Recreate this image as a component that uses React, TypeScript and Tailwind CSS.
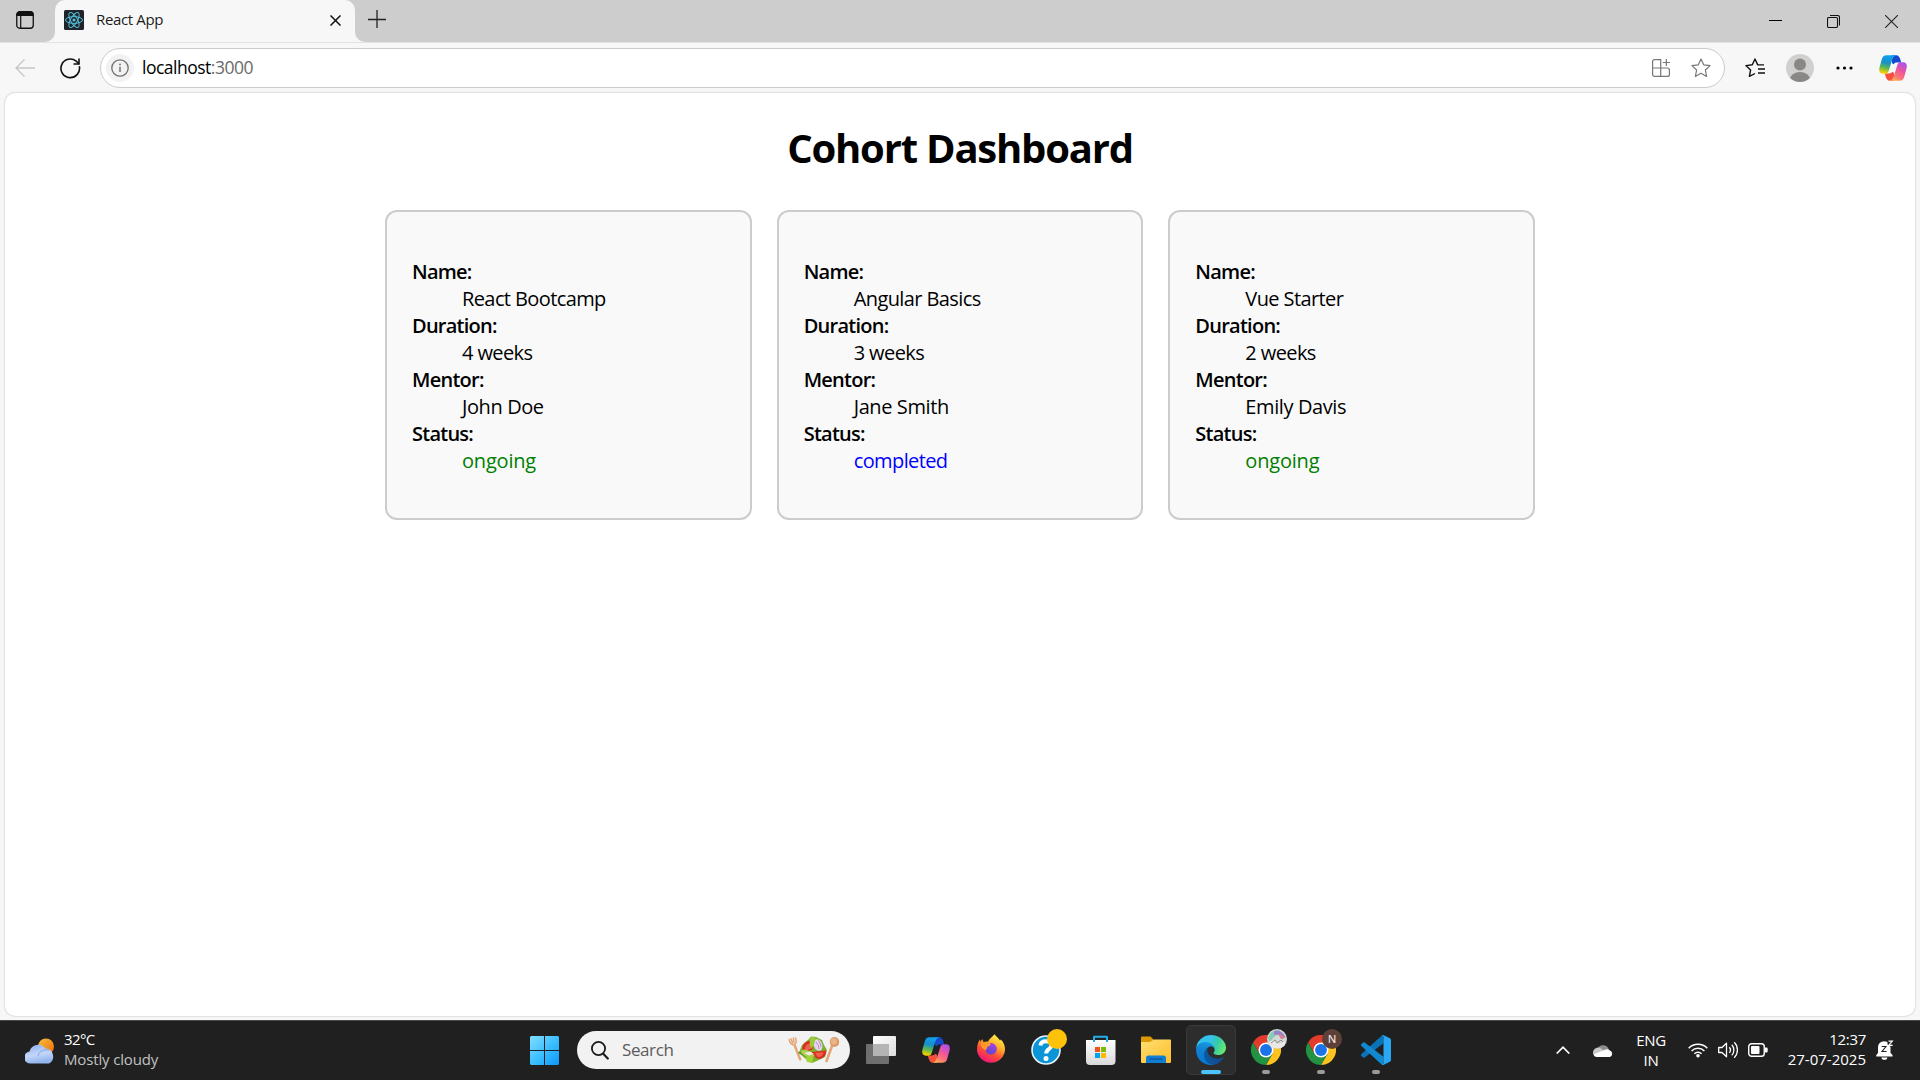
import React from "react";

type Cohort = { name: string; duration: string; mentor: string; status: "ongoing" | "completed" };

const cohorts: Cohort[] = [
  { name: "React Bootcamp", duration: "4 weeks", mentor: "John Doe", status: "ongoing" },
  { name: "Angular Basics", duration: "3 weeks", mentor: "Jane Smith", status: "completed" },
  { name: "Vue Starter", duration: "2 weeks", mentor: "Emily Davis", status: "ongoing" },
];

/* ---------- logos ---------- */

function CopilotLogo({ id }: { id: string }) {
  return (
    <svg width="28" height="26" viewBox="0 0 28 26">
      <defs>
        <linearGradient id={id + "a"} x1="0.5" y1="0" x2="0.3" y2="1">
          <stop offset="0" stopColor="#12a0f0" />
          <stop offset="0.4" stopColor="#1790c8" />
          <stop offset="0.68" stopColor="#5db94e" />
          <stop offset="0.95" stopColor="#f5d000" />
        </linearGradient>
        <linearGradient id={id + "b"} x1="0.8" y1="0" x2="0.3" y2="1">
          <stop offset="0" stopColor="#a94ff0" />
          <stop offset="0.45" stopColor="#f0559a" />
          <stop offset="0.8" stopColor="#fb7a72" />
          <stop offset="1" stopColor="#ffb152" />
        </linearGradient>
      </defs>
      <path d="M13 .3H17C19.600 .3 20.600 2 21.300 4.300L22.200 7.600H18.500C16.500 7.600 15.500 8 14.500 9.300L13 8Z" fill="#1749cf" />
      <path d="M15 25.700H11C8.400 25.700 7.400 24 6.700 21.700L5.800 18.400H9.500C11.500 18.400 12.500 18 13.500 16.700L15 18Z" fill="#f5503c" />
      <path d="M7.800 .3H17.300C14.800 1 13.800 3 12.800 6L9.900 15.200C9.200 17.700 8.300 18.700 6 18.700H4C.6 18.700-.4 16.200 .5 12.500L2.700 4.600C3.500 1.700 4.800 .3 7.800 .3Z" fill={`url(#${id}a)`} />
      <path d="M20.200 25.700H10.700C13.200 25 14.200 23 15.200 20L18.100 10.800C18.800 8.300 19.700 7.300 22 7.300H24C27.400 7.300 28.400 9.800 27.500 13.500L25.300 21.400C24.500 24.300 23.200 25.700 20.200 25.700Z" fill={`url(#${id}b)`} />
    </svg>
  );
}

function EdgeLogo() {
  return (
    <svg width="30" height="30" viewBox="0 0 256 256">
      <defs>
        <linearGradient id="edgeDark" x1="0" y1="0.5" x2="1" y2="0.5">
          <stop offset="0" stopColor="#0c59a4" />
          <stop offset="1" stopColor="#114a8b" />
        </linearGradient>
        <linearGradient id="edgeMid" x1="0.6" y1="0" x2="0.4" y2="1">
          <stop offset="0" stopColor="#1b9de2" />
          <stop offset="0.45" stopColor="#1080d0" />
          <stop offset="1" stopColor="#0678d4" />
        </linearGradient>
        <linearGradient id="edgeTop" x1="0" y1="0.3" x2="1" y2="0.6">
          <stop offset="0" stopColor="#35c1f1" />
          <stop offset="0.4" stopColor="#34c1ed" />
          <stop offset="0.68" stopColor="#36c9a6" />
          <stop offset="1" stopColor="#66eb6e" />
        </linearGradient>
      </defs>
      <path fill="url(#edgeDark)" d="M231 190.500a94 94 0 0 1-10.500 4.700 102 102 0 0 1-36 6.500c-47.300 0-88.500-32.500-88.500-74.300A31.500 31.500 0 0 1 112.500 100c-42.800 1.800-53.800 46.400-53.800 72.500 0 74 68 81.400 82.700 81.400 8 0 19.900-2.300 27-4.500l1.300-.5a128 128 0 0 0 66.600-52.800 4 4 0 0 0-5.300-5.600z" />
      <path fill="url(#edgeMid)" d="M105.700 241.400A79.200 79.200 0 0 1 83 220.100a80.700 80.700 0 0 1 29.500-120c3.100-1.500 8.500-4.100 15.600-4a32.400 32.400 0 0 1 25.700 13 31.900 31.900 0 0 1 6.300 18.700c0-.2 24.500-79.600-80-79.600C36.100 48.200 0 89.900 0 126.400a130 130 0 0 0 12.100 56 128 128 0 0 0 156.400 67.100 75.500 75.500 0 0 1-62.800-8z" />
      <path fill="url(#edgeTop)" d="M152.300 148.900c-.8 1-3.300 2.500-3.300 5.600 0 2.600 1.700 5.200 4.700 7.300 14.400 10 41.500 8.700 41.500 8.700a59.600 59.600 0 0 0 30.300-8.300A61.400 61.400 0 0 0 256 109.200c.2-22.400-8-37.300-11.400-43.900C223.500 23.900 177.700 0 128 0A128 128 0 0 0 0 126.200C.5 89.700 36.800 60.200 80 60.200c3.500 0 23.500.3 42 10.100 16.300 8.500 24.900 18.900 30.800 29.200 6.200 10.600 7.300 24.100 7.300 29.500s-2.700 13.300-7.800 19.900z" />
    </svg>
  );
}

function ChromeLogo() {
  return (
    <svg width="30" height="30" viewBox="0 0 48 48">
      <path d="M24 12H44.800A24 24 0 0 0 3.200 12L13.600 30Z" fill="#e33b2e" />
      <path d="M44.800 12H24L34.400 30 24 48A24 24 0 0 0 44.800 12Z" fill="#fcc31e" />
      <path d="M3.200 12 13.600 30 24 36 34.400 30 24 48A24 24 0 0 1 3.200 12Z" fill="#229342" />
      <circle cx="24" cy="24" r="12" fill="#fff" />
      <circle cx="24" cy="24" r="9.500" fill="#1a73e8" />
    </svg>
  );
}

function VsCodeLogo() {
  return (
    <svg width="30" height="30" viewBox="0 0 24 24">
      <path d="M.33 15.260 16.500.500A1.500 1.500 0 0 1 18 .150V6.550L2.930 18a1 1 0 0 1-1.280-.060L.330 16.740a1 1 0 0 1 0-1.480Z" fill="#0873b8" />
      <path d="M.330 8.740 16.500 23.500A1.500 1.500 0 0 0 18 23.850V17.450L2.930 6a1 1 0 0 0-1.280.060L.330 7.260a1 1 0 0 0 0 1.480Z" fill="#1189d0" />
      <path d="M23.150 2.590 18.210.210A1.490 1.490 0 0 0 16.600.450C17.300.200 18 .700 18 1.500V22.500C18 23.300 17.300 23.800 16.600 23.550A1.490 1.490 0 0 0 18.210 23.790L23.150 21.410A1.500 1.500 0 0 0 24 20.060V3.940A1.500 1.500 0 0 0 23.150 2.590Z" fill="#2aa7f2" />
    </svg>
  );
}

function FirefoxLogo() {
  return (
    <svg width="28" height="29" viewBox="0 0 28 29">
      <defs>
        <linearGradient id="ffBody" x1="0.8" y1="0.05" x2="0.3" y2="1">
          <stop offset="0" stopColor="#fff04a" />
          <stop offset="0.35" stopColor="#ffb02a" />
          <stop offset="0.65" stopColor="#ff4d36" />
          <stop offset="1" stopColor="#ee1080" />
        </linearGradient>
        <linearGradient id="ffCore" x1="0.7" y1="0" x2="0.3" y2="1">
          <stop offset="0" stopColor="#a541e8" />
          <stop offset="1" stopColor="#5a48c8" />
        </linearGradient>
      </defs>
      <path d="M17.500 .3C19 2.500 21.500 4 23 6.500L23.800 5.500C26.500 8 28 11.500 28 15A14 13.700 0 0 1 0 15C0 11.500 1 8 3 5.500L3.500 8C4 6.500 4.800 5.700 5.500 5.200L6.500 8.300C8 7.500 9.500 7.500 11 7.800 12 5 14.500 3.500 17.500 .3Z" fill="url(#ffBody)" />
      <circle cx="14" cy="14.800" r="5.800" fill="url(#ffCore)" />
      <path d="M4 9.500C6.500 7.500 9.500 8 11 9.200 12.500 9.300 13.500 9.600 14 10.200 13.500 11.800 10.500 12 10.200 13.200 9.900 14.500 9 15.500 8.500 16.200 5.500 15 4 12.500 4 9.500Z" fill="#ff9a28" />
    </svg>
  );
}

function StoreLogo() {
  return (
    <svg width="30" height="30" viewBox="0 0 30 30">
      <defs>
        <linearGradient id="bag" x1="0" y1="0" x2="0" y2="1">
          <stop offset="0" stopColor="#ffffff" />
          <stop offset="1" stopColor="#d9d9d9" />
        </linearGradient>
      </defs>
      <path d="M0 5h29.500v21a4 4 0 0 1-4 4h-21.500a4 4 0 0 1-4-4Z" fill="url(#bag)" />
      <path d="M8 7V2.200q0-.4.500-.4h12q.5 0 .5.400V7" fill="none" stroke="#22aee8" strokeWidth="2" />
      <rect x="9" y="12" width="5" height="5" fill="#f1511b" />
      <rect x="15" y="12" width="5" height="5" fill="#80bb02" />
      <rect x="9" y="18" width="5" height="5" fill="#02a3ee" />
      <rect x="15" y="18" width="5" height="5" fill="#fbb900" />
    </svg>
  );
}

function FolderLogo() {
  return (
    <svg width="30" height="28" viewBox="0 0 30 28">
      <defs>
        <linearGradient id="fold" x1="0" y1="0" x2="1" y2="1">
          <stop offset="0" stopColor="#ffdf73" />
          <stop offset="1" stopColor="#fdbd2a" />
        </linearGradient>
      </defs>
      <path d="M0 1.500Q0 .5 1 .5H9.500L13 4V8H0Z" fill="#dc9a05" />
      <path d="M0 6H9L13 3.500H29Q30 3.500 30 4.500V26Q30 27 29 27H1Q0 27 0 26Z" fill="url(#fold)" />
      <path d="M5 27V22Q5 19.500 7.500 19.500H22.500Q25 19.500 25 22V27Z" fill="#107ed2" />
      <path d="M8.500 23H21.500" stroke="#0a4f96" strokeWidth="1.200" />
    </svg>
  );
}

function ReactFavicon() {
  return (
    <svg width="20" height="20" viewBox="0 0 20 20">
      <rect width="20" height="20" rx="1.500" fill="#20232a" />
      <g fill="none" stroke="#53bfd8" strokeWidth="1">
        <ellipse cx="10" cy="10" rx="8.500" ry="3.400" />
        <ellipse cx="10" cy="10" rx="8.500" ry="3.400" transform="rotate(60 10 10)" />
        <ellipse cx="10" cy="10" rx="8.500" ry="3.400" transform="rotate(120 10 10)" />
      </g>
      <circle cx="10" cy="10" r="1.600" fill="#53bfd8" />
    </svg>
  );
}

function Salad() {
  return (
    <svg width="52" height="28" viewBox="0 0 52 28">
      <g stroke="#e3a777" strokeLinecap="round" fill="none">
        <path d="M6.500 9 12.200 23.500" strokeWidth="2.400" />
        <path d="M1.200 3.500C2 8 4.500 9.500 6 8.500 8 8 9 6 7.600 2M3.200 2.700 4.500 7M5.400 2 6 6.500" strokeWidth="1.500" />
        <path d="M44 10 38.500 25" strokeWidth="2.600" />
      </g>
      <ellipse cx="46.500" cy="6" rx="4.700" ry="5" fill="#dc9a6a" />
      <ellipse cx="46" cy="5.500" rx="3" ry="3.200" fill="#eab588" />
      <path d="M11 17 14 9 20 4 23 .5 28 1 34 4 36 9 39 14 37 21 31 24 24 27 19 24Z" fill="#7fb02c" />
      <path d="M14 13 10 17 20 22Z" fill="#5b9424" />
      <path d="M14.500 13A7.500 7.500 0 0 1 23 4.800L25 13 17 17Z" fill="#d92f22" />
      <path d="M17 13A5 5 0 0 1 22 7.500L23 12.500 18.500 15Z" fill="#f0604a" />
      <path d="M24 16 38 14.500A7 7 0 0 1 29 22.500L24 19Z" fill="#d92f22" />
      <path d="M27 17 35.500 16.300A5 5 0 0 1 29.500 20.800Z" fill="#f0604a" />
      <ellipse cx="30" cy="9" rx="4.200" ry="6" fill="#e6d4ea" transform="rotate(-20 30 9)" />
      <path d="M28 6Q31 9 31 13M30.500 4.500Q33 8 33 11" fill="none" stroke="#b48ac2" strokeWidth=".9" />
      <path d="M22 2Q25-.500 27.500 2 27 8 23 13 21 7 22 2Z" fill="#9ccc3e" />
      <path d="M12 15Q17 12 21 15T27 20L22 22Q16 21 12 15Z" fill="#a9cf55" />
      <path d="M16 17 22 15.500 26 18 21 19.500Z" fill="#f1ecdc" />
      <path d="M17.500 22Q23 18 25.500 22L24 27 19 26Z" fill="#a2d338" />
    </svg>
  );
}

/* ---------- browser chrome ---------- */

function TabStrip() {
  return (
    <div className="flex h-[42px] w-full">
      <div className="h-[42px] w-[55px] rounded-br-[10px] bg-[#cdcdcd] pl-4 pt-[11px]">
        <svg width="18" height="18" viewBox="0 0 18 18" fill="none">
          <rect x=".75" y=".75" width="16.500" height="16.500" rx="3" stroke="#111" strokeWidth="1.300" />
          <path d="M.5 5V3.500A3 3 0 0 1 3.500 .5h11a3 3 0 0 1 3 3V5Z" fill="#111" />
          <path d="M4.700 5v12" stroke="#111" strokeWidth="1.200" />
        </svg>
      </div>
      <div className="h-[42px] w-[300px] bg-[linear-gradient(#cdcdcd_50%,#f7f7f7_50%)]">
        <div className="flex h-[42px] items-start rounded-t-[10px] bg-[#f7f7f7] pl-[9px] pr-[14px] pt-[10px]">
          <ReactFavicon />
          <span className="-mt-px ml-[12px] flex-1 whitespace-nowrap text-[15px] leading-[20px] tracking-[-0.35px] text-[#1b1b1b]">React App</span>
          <svg width="11" height="11" viewBox="0 0 11 11" className="mt-[5px]">
            <path d="M.5 .5l10 10M10.500 .5l-10 10" stroke="#111" strokeWidth="1.500" />
          </svg>
        </div>
      </div>
      <div className="flex h-[42px] flex-1 justify-between rounded-bl-[10px] bg-[#cdcdcd] pl-[13px] pr-[22px]">
        <svg width="18" height="18" viewBox="0 0 18 18" className="mt-[10px]">
          <path d="M9 0v18M0 9.500h18" stroke="#222" strokeWidth="1.300" />
        </svg>
        <div className="flex items-start gap-[45px] pt-[15px]">
          <svg width="13" height="13" viewBox="0 0 13 13"><path d="M0 5.500h13" stroke="#000" /></svg>
          <svg width="13" height="13" viewBox="0 0 13 13" fill="none" stroke="#111" strokeWidth="1.100">
            <rect x=".5" y="2.500" width="10" height="10" rx="1.300" />
            <path d="M3 .5h7.500a2 2 0 0 1 2 2v8" />
          </svg>
          <svg width="13" height="13" viewBox="0 0 13 13"><path d="M0 0l13 13M13 0L0 13" stroke="#222" strokeWidth="1.100" /></svg>
        </div>
      </div>
    </div>
  );
}

function Toolbar() {
  return (
    <div className="flex h-[51px] w-full items-center border-t border-[#e3e3e3] pl-[15px] pr-[13px]">
      <svg width="20" height="18" viewBox="0 0 20 18" fill="none" stroke="#c6c6c6" strokeWidth="1.300">
        <path d="M20 9H1M9.500 .5 1 9l8.500 8.500" />
      </svg>
      <svg width="21" height="21" viewBox="0 0 21 21" fill="none" stroke="#111" strokeWidth="1.600" className="ml-[25px]">
        <path d="M19.300 8.200A9.300 9.300 0 1 1 16.200 3.200L19 5.800" />
        <path d="M19 .5V6H13.500" />
      </svg>
      <div className="ml-[19px] flex h-[40px] w-[1625px] items-center rounded-full border border-[#cbcbcb] bg-white pl-[5px] pr-[13px]">
        <div className="flex h-7 w-7 items-center justify-center rounded-full bg-[#f2f2f2]">
          <svg width="18" height="18" viewBox="0 0 18 18" fill="none" stroke="#707070" strokeWidth="1.300">
            <circle cx="9" cy="9" r="8.200" />
            <path d="M9 7.700V13" strokeWidth="1.500" />
            <circle cx="9" cy="5.400" r=".9" fill="#707070" stroke="none" />
          </svg>
        </div>
        <span className="mb-[2px] ml-[8px] flex-1 whitespace-nowrap text-[17.500px] tracking-[-0.5px] text-black">
          localhost<span className="text-[#6b6b6b]">:3000</span>
        </span>
        <svg width="18" height="18" viewBox="0 0 18 18" fill="none" stroke="#777" strokeWidth="1.200">
          <path d="M.6 2.600a2 2 0 0 1 2-2H8.700V17.400H2.600a2 2 0 0 1-2-2ZM.6 9H15.400a2 2 0 0 1 2 2v4.400a2 2 0 0 1-2 2H8.700M14.300 0v7M10.800 3.500H18" />
        </svg>
        <svg width="20" height="20" viewBox="0 0 20 20" fill="none" stroke="#777" strokeWidth="1.200" strokeLinejoin="round" className="ml-[21px]">
          <path d="M10 1l2.700 5.800 6.400.8-4.700 4.400 1.200 6.400L10 15.300 4.400 18.400 5.600 12 .9 7.600l6.400-.8Z" />
        </svg>
      </div>
      <svg width="20" height="20" viewBox="0 0 20 20" fill="none" stroke="#111" strokeWidth="1.400" strokeLinejoin="round" className="ml-[20px]">
        <path d="M19 6.900H12.700L10 1 7.300 6.800.9 7.600 5.600 12 4.400 18.400 10 15.500M13 11H20M13 15H20" />
      </svg>
      <svg width="28" height="28" viewBox="0 0 28 28" className="ml-[21px]">
        <defs><clipPath id="avatar"><circle cx="14" cy="14" r="14" /></clipPath></defs>
        <g clipPath="url(#avatar)">
          <rect width="28" height="28" fill="#d2d0ce" />
          <circle cx="14" cy="10.500" r="6" fill="#8a8886" />
          <ellipse cx="14" cy="25.500" rx="10" ry="7.500" fill="#8a8886" />
        </g>
      </svg>
      <svg width="17" height="4" viewBox="0 0 17 4" className="ml-[22px]">
        <circle cx="2" cy="2" r="1.600" /><circle cx="8.500" cy="2" r="1.600" /><circle cx="15" cy="2" r="1.600" />
      </svg>
      <div className="ml-auto"><CopilotLogo id="cpTop" /></div>
    </div>
  );
}

/* ---------- page ---------- */

function CohortCard({ cohort }: { cohort: Cohort }) {
  return (
    <div className="h-[310px] flex-1 rounded-[12px] border-2 border-[#ccc] bg-[#f9f9f9] px-[25px] pt-[46px]">
      <dl className="text-[20px] leading-[27px] tracking-[-0.6px] text-black [&_dd]:ml-[50px] [&_dt]:font-semibold [&_dt]:tracking-[-0.75px]">
        <dt>Name:</dt>
        <dd>{cohort.name}</dd>
        <dt>Duration:</dt>
        <dd>{cohort.duration}</dd>
        <dt>Mentor:</dt>
        <dd className="tracking-[-0.4px]">{cohort.mentor}</dd>
        <dt>Status:</dt>
        <dd className={cohort.status === "ongoing" ? "tracking-[-0.2px] text-[#008000]" : "text-[#0000ff]"}>{cohort.status}</dd>
      </dl>
    </div>
  );
}

/* ---------- taskbar ---------- */

function Tile({ children, active, running }: { children: React.ReactNode; active?: boolean; running?: boolean }) {
  return (
    <div className={active ? "relative flex h-[50px] w-[50px] items-center justify-center rounded-[5px] border border-[#3a3a3a] bg-[#2d2d2d]" : "relative flex h-[50px] w-[50px] items-center justify-center"}>
      {children}
      {active && <div className="absolute bottom-0 left-[14px] h-1 w-5 rounded-full bg-[#4cc2ff]" />}
      {running && <div className="absolute bottom-[1px] left-[21px] h-1 w-2 rounded-full bg-[#9a9a9a]" />}
    </div>
  );
}

function Taskbar() {
  return (
    <div className="flex h-[60px] w-full items-center border-t border-[#484848] bg-[#202020] pb-px text-[15px] text-white">
      <div className="flex w-[519px] items-center pl-[25px]">
        <svg width="30" height="26" viewBox="0 0 30 26" className="mt-[1px]">
          <defs>
            <linearGradient id="sun" x1="0" y1="0" x2="1" y2="1"><stop offset="0" stopColor="#f8c13a" /><stop offset="1" stopColor="#f06a10" /></linearGradient>
            <linearGradient id="cld" x1="0" y1="0" x2="0.3" y2="1"><stop offset="0" stopColor="#8fb0ee" /><stop offset="0.6" stopColor="#c3d6f8" /><stop offset="1" stopColor="#92b5ee" /></linearGradient>
          </defs>
          <circle cx="21" cy="8.500" r="8" fill="url(#sun)" />
          <path d="M6 25.500A6 6 0 0 1 4.500 13.500 9 9 0 0 1 20.500 10.500 8 8 0 0 1 24 25.500Z" fill="url(#cld)" />
          <path d="M13 18C14 13 20 10.500 24 12.500" stroke="#86a5e6" strokeWidth="1" fill="none" />
        </svg>
        <div className="mb-[3px] ml-[9px] whitespace-nowrap leading-[20px]">
          <div className="tracking-[-0.6px]">32°C</div>
          <div className="tracking-[-0.15px] text-[#c2c2c2]">Mostly cloudy</div>
        </div>
      </div>
      <Tile>
        <svg width="29" height="29" viewBox="0 0 29 29">
          <defs><linearGradient id="win" gradientUnits="userSpaceOnUse" x1="0" y1="0" x2="29" y2="29"><stop offset="0" stopColor="#82dfff" /><stop offset="0.55" stopColor="#38bdff" /><stop offset="1" stopColor="#0c95fb" /></linearGradient></defs>
          <path d="M1 0H14V14H0V1ZM15 0H28L29 1V14H15ZM0 15H14V29H1L0 28ZM15 15H29V28L28 29H15Z" fill="url(#win)" />
        </svg>
      </Tile>
      <div className="ml-[8px] mr-[6px] flex h-[38px] w-[273px] items-center rounded-full bg-[#f2f2f2] pl-[14px] pr-[10px]">
        <svg width="18" height="19" viewBox="0 0 18 19" fill="none" stroke="#1c1c1c" strokeLinecap="round">
          <circle cx="7.500" cy="7.500" r="6.600" strokeWidth="1.800" />
          <path d="M12.500 13l4.300 4.500" strokeWidth="2.200" />
        </svg>
        <span className="ml-[13px] flex-1 text-[17px] tracking-[-0.4px] text-[#5c5c5c]">Search</span>
        <Salad />
      </div>
      <div className="flex gap-[5px]">
        <Tile>
          <svg width="30" height="28" viewBox="0 0 30 28">
            <defs><linearGradient id="tv" x1="0" y1="0" x2="1" y2="1"><stop offset="0" stopColor="#fff" /><stop offset="1" stopColor="#dcdcdc" /></linearGradient></defs>
            <rect x="7" y="0" width="23" height="20" rx="1" fill="url(#tv)" />
            <rect x="0" y="8" width="23" height="20" rx="1" fill="#6f6f6f" />
            <rect x="7" y="8" width="16" height="12" fill="#b4b4b4" />
          </svg>
        </Tile>
        <Tile><CopilotLogo id="cpBar" /></Tile>
        <Tile><div className="mb-[3px]"><FirefoxLogo /></div></Tile>
        <Tile>
          <svg width="30" height="30" viewBox="0 0 30 30">
            <circle cx="15" cy="15" r="14" fill="#0a95d8" stroke="#e8f4fa" strokeWidth="1.600" />
            <path d="M9.500 10.500Q10 6.300 15 6.300 20.300 6.300 20.300 10.500C20.300 14.500 15.200 14 15.200 18.500" fill="none" stroke="#fff" strokeWidth="4" />
            <circle cx="15" cy="23.500" r="2.500" fill="#fff" />
          </svg>
          <div className="absolute left-[26px] top-[4px] h-5 w-5 rounded-full bg-[#ffc20a]" />
        </Tile>
        <Tile><StoreLogo /></Tile>
        <Tile><FolderLogo /></Tile>
        <Tile active><EdgeLogo /></Tile>
        <Tile running>
          <ChromeLogo />
          <svg width="20" height="20" viewBox="0 0 20 20" className="absolute left-[26px] top-[4px]">
            <defs><clipPath id="bdg"><circle cx="10" cy="10" r="10" /></clipPath></defs>
            <g clipPath="url(#bdg)">
              <rect width="20" height="20" fill="#d4d8d6" />
              <path d="M1 9Q3 1 12 1L19 9 14 8Q11 4 7 8L3 13Z" fill="#86cdb4" />
              <path d="M7 2Q14 0 18.500 8L15 9Q12 4 7 6Z" fill="#9a80cc" />
              <path d="M11 5Q16 5 17 10L14 10Z" fill="#de8088" />
              <path d="M2 13Q9 9 10 13T18 12V19H5Z" fill="#ecebe6" opacity=".85" />
              <path d="M4 14 8 11 10 14 14 11 16 13" stroke="#8c8c8c" fill="none" />
            </g>
          </svg>
        </Tile>
        <Tile running>
          <ChromeLogo />
          <div className="absolute left-[26px] top-[4px] flex h-5 w-5 items-center justify-center rounded-full bg-[#5d4037] text-[11px] font-semibold text-[#e4dcd9]">N</div>
        </Tile>
        <Tile running><VsCodeLogo /></Tile>
      </div>
      <div className="ml-auto flex items-center pr-[26px]">
        <svg width="14" height="8" viewBox="0 0 14 8" fill="none" stroke="#fff" strokeWidth="1.700"><path d="M.7 7.500 7 1.200l6.300 6.300" /></svg>
        <svg width="20" height="13" viewBox="0 0 20 13" className="ml-[23px]">
          <path d="M4.500 5A6 6 0 0 1 15.500 4.500L16 8H5Z" fill="#8c8c8c" />
          <path d="M4 12.500A4 4 0 0 1 .5 6.500 5 5 0 0 1 8 4.500L14 9Z" fill="#c9c9c9" />
          <path d="M3.500 13Q1 12.500 .5 10.500L11.500 6A5 5 0 0 1 17 6.500 3.500 3.500 0 0 1 17 13Z" fill="#fff" />
        </svg>
        <div className="mb-[1px] ml-[18px] w-[40px] text-center leading-[20px] tracking-[-0.3px]">
          <div>ENG</div>
          <div>IN</div>
        </div>
        <svg width="20" height="16" viewBox="0 0 20 16" fill="none" stroke="#fff" strokeWidth="1.500" className="ml-[17px]">
          <path d="M.7 6.200a13 13 0 0 1 18.600 0M3.600 9a9 9 0 0 1 12.800 0M6.400 11.800a5 5 0 0 1 7.200 0" />
          <circle cx="10" cy="13.800" r="1.800" fill="#fff" stroke="none" />
        </svg>
        <svg width="20" height="18" viewBox="0 0 20 18" fill="none" stroke="#fff" strokeWidth="1.300" className="ml-[10px]" strokeLinejoin="round">
          <path d="M.7 6.500H4L8.500 2.200V15.800L4 11.500H.7ZM11.300 6.300a4 4 0 0 1 0 5.400M13.800 3.800a7.500 7.500 0 0 1 0 10.400M16.300 1.300a11 11 0 0 1 0 15.400" />
        </svg>
        <svg width="20" height="14" viewBox="0 0 20 14" className="ml-[10px]">
          <rect x=".75" y=".75" width="15.500" height="12.500" rx="2.800" fill="none" stroke="#fff" strokeWidth="1.400" />
          <rect x="3" y="3" width="8.500" height="8" rx="1" fill="#fff" />
          <path d="M17 4.500h1.500a1.200 1.200 0 0 1 1.200 1.200v2.600a1.200 1.200 0 0 1-1.200 1.200H17Z" fill="#fff" />
        </svg>
        <div className="mb-[3px] ml-[18px] w-[80px] text-right leading-[20px]">
          <div className="tracking-[-0.3px]">12:37</div>
          <div className="whitespace-nowrap">27-07-2025</div>
        </div>
        <svg width="18" height="20" viewBox="0 0 18 20" className="ml-[10px]">
          <path d="M2 13V7.500A6 6 0 0 1 8 1.200Q14.500 1.200 14.500 7.500V13L16.500 15V16.500H.3V15Z" fill="#fff" />
          <path d="M5.500 17.500h5.800a2.900 2.300 0 0 1-5.800 0Z" fill="#fff" />
          <path d="M5.700 6.500h4.300L6 11.500h4.600" fill="none" stroke="#202020" strokeWidth="1.100" />
          <path d="M11.500 0H18V6.300H13.500L11.500 4.500Z" fill="#202020" />
          <path d="M12.500 1.200h3.800l-3.600 4.200h4" fill="none" stroke="#fff" strokeWidth="1.200" />
        </svg>
      </div>
    </div>
  );
}

export default function App() {
  return (
    <div className="flex h-[1080px] w-[1920px] flex-col overflow-hidden bg-[#f7f7f7] font-['Open_Sans','Noto_Sans',sans-serif]">
      <TabStrip />
      <Toolbar />
      <main className="mx-[5px] mb-[4px] flex-1 rounded-[10px] bg-white shadow-[0_0_2px_rgba(0,0,0,0.3)]">
        <h1 className="pt-[28px] text-center text-[40px] font-bold leading-[54px] tracking-[-1.2px] text-black">Cohort Dashboard</h1>
        <div className="mx-auto mt-[35px] flex w-[1150px] gap-[25px]">
          {cohorts.map((c) => (
            <CohortCard key={c.name} cohort={c} />
          ))}
        </div>
      </main>
      <Taskbar />
    </div>
  );
}
